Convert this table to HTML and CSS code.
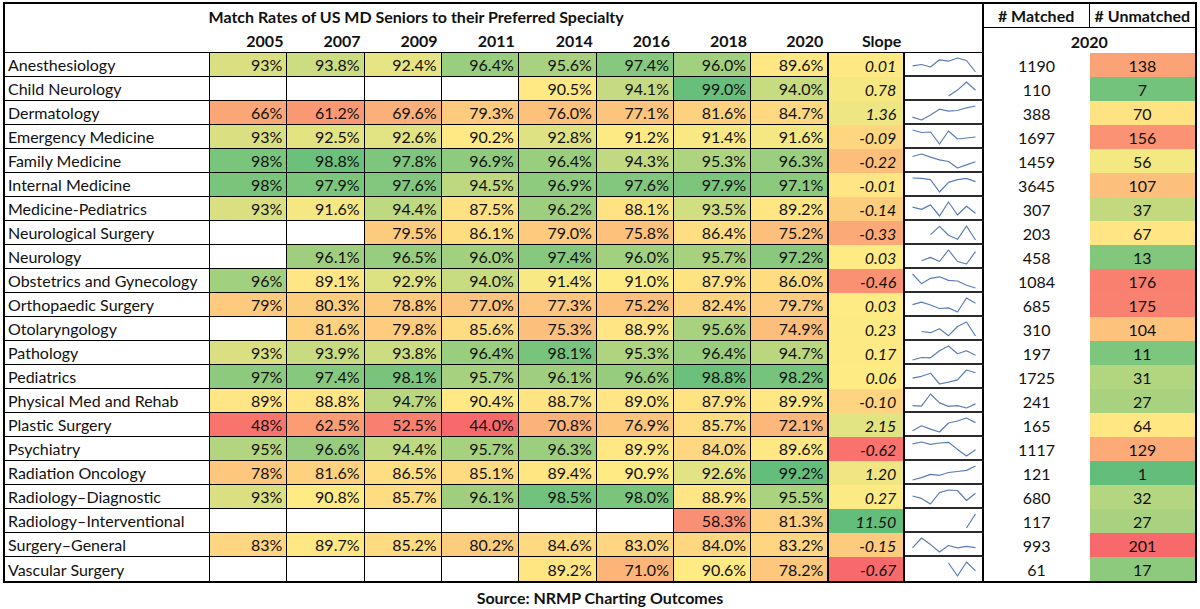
FILE: index.html
```html
<!DOCTYPE html>
<html lang="en">
<head>
<meta charset="utf-8">
<title>Match Rates of US MD Seniors to their Preferred Specialty</title>
<link rel="stylesheet" href="styles.css">
</head>
<body>
<div class="sheet">
<table class="grid">
<colgroup>
<col class="c-name"><col class="c-yr"><col class="c-yr"><col class="c-yr"><col class="c-yr"><col class="c-yr-w"><col class="c-yr"><col class="c-yr"><col class="c-yr-n"><col class="c-slope"><col class="c-spark"><col class="c-matched"><col class="c-unmatched">
</colgroup>
<thead>
<tr class="h1">
<th class="title" colspan="9">Match Rates of US MD Seniors to their Preferred Specialty</th>
<th class="hs"></th><th class="hsp"></th>
<th class="hm">#&nbsp;Matched</th><th class="hu">#&nbsp;Unmatched</th>
</tr>
<tr class="h2">
<th class="hn"></th><th class="hy">2005</th><th class="hy">2007</th><th class="hy">2009</th><th class="hy">2011</th><th class="hy">2014</th><th class="hy">2016</th><th class="hy">2018</th><th class="hy">2020</th>
<th class="hy hslope">Slope</th><th class="hsp hsp2"></th>
<th class="hyear" colspan="2">2020</th>
</tr>
</thead>
<tbody>
<tr class="d"><td class="n">Anesthesiology</td><td class="y">93%</td><td class="y">93.8%</td><td class="y">92.4%</td><td class="y">96.4%</td><td class="y">95.6%</td><td class="y">97.4%</td><td class="y">96.0%</td><td class="y">89.6%</td><td class="s">0.01</td><td class="sp"></td><td class="m">1190</td><td class="u">138</td></tr>
<tr class="d"><td class="n">Child Neurology</td><td class="y"></td><td class="y"></td><td class="y"></td><td class="y"></td><td class="y">90.5%</td><td class="y">94.1%</td><td class="y">99.0%</td><td class="y">94.0%</td><td class="s">0.78</td><td class="sp"></td><td class="m">110</td><td class="u">7</td></tr>
<tr class="d"><td class="n">Dermatology</td><td class="y">66%</td><td class="y">61.2%</td><td class="y">69.6%</td><td class="y">79.3%</td><td class="y">76.0%</td><td class="y">77.1%</td><td class="y">81.6%</td><td class="y">84.7%</td><td class="s">1.36</td><td class="sp"></td><td class="m">388</td><td class="u">70</td></tr>
<tr class="d"><td class="n">Emergency Medicine</td><td class="y">93%</td><td class="y">92.5%</td><td class="y">92.6%</td><td class="y">90.2%</td><td class="y">92.8%</td><td class="y">91.2%</td><td class="y">91.4%</td><td class="y">91.6%</td><td class="s">-0.09</td><td class="sp"></td><td class="m">1697</td><td class="u">156</td></tr>
<tr class="d"><td class="n">Family Medicine</td><td class="y">98%</td><td class="y">98.8%</td><td class="y">97.8%</td><td class="y">96.9%</td><td class="y">96.4%</td><td class="y">94.3%</td><td class="y">95.3%</td><td class="y">96.3%</td><td class="s">-0.22</td><td class="sp"></td><td class="m">1459</td><td class="u">56</td></tr>
<tr class="d"><td class="n">Internal Medicine</td><td class="y">98%</td><td class="y">97.9%</td><td class="y">97.6%</td><td class="y">94.5%</td><td class="y">96.9%</td><td class="y">97.6%</td><td class="y">97.9%</td><td class="y">97.1%</td><td class="s">-0.01</td><td class="sp"></td><td class="m">3645</td><td class="u">107</td></tr>
<tr class="d"><td class="n">Medicine-Pediatrics</td><td class="y">93%</td><td class="y">91.6%</td><td class="y">94.4%</td><td class="y">87.5%</td><td class="y">96.2%</td><td class="y">88.1%</td><td class="y">93.5%</td><td class="y">89.2%</td><td class="s">-0.14</td><td class="sp"></td><td class="m">307</td><td class="u">37</td></tr>
<tr class="d"><td class="n">Neurological Surgery</td><td class="y"></td><td class="y"></td><td class="y">79.5%</td><td class="y">86.1%</td><td class="y">79.0%</td><td class="y">75.8%</td><td class="y">86.4%</td><td class="y">75.2%</td><td class="s">-0.33</td><td class="sp"></td><td class="m">203</td><td class="u">67</td></tr>
<tr class="d"><td class="n">Neurology</td><td class="y"></td><td class="y">96.1%</td><td class="y">96.5%</td><td class="y">96.0%</td><td class="y">97.4%</td><td class="y">96.0%</td><td class="y">95.7%</td><td class="y">97.2%</td><td class="s">0.03</td><td class="sp"></td><td class="m">458</td><td class="u">13</td></tr>
<tr class="d"><td class="n">Obstetrics and Gynecology</td><td class="y">96%</td><td class="y">89.1%</td><td class="y">92.9%</td><td class="y">94.0%</td><td class="y">91.4%</td><td class="y">91.0%</td><td class="y">87.9%</td><td class="y">86.0%</td><td class="s">-0.46</td><td class="sp"></td><td class="m">1084</td><td class="u">176</td></tr>
<tr class="d"><td class="n">Orthopaedic Surgery</td><td class="y">79%</td><td class="y">80.3%</td><td class="y">78.8%</td><td class="y">77.0%</td><td class="y">77.3%</td><td class="y">75.2%</td><td class="y">82.4%</td><td class="y">79.7%</td><td class="s">0.03</td><td class="sp"></td><td class="m">685</td><td class="u">175</td></tr>
<tr class="d"><td class="n">Otolaryngology</td><td class="y"></td><td class="y">81.6%</td><td class="y">79.8%</td><td class="y">85.6%</td><td class="y">75.3%</td><td class="y">88.9%</td><td class="y">95.6%</td><td class="y">74.9%</td><td class="s">0.23</td><td class="sp"></td><td class="m">310</td><td class="u">104</td></tr>
<tr class="d"><td class="n">Pathology</td><td class="y">93%</td><td class="y">93.9%</td><td class="y">93.8%</td><td class="y">96.4%</td><td class="y">98.1%</td><td class="y">95.3%</td><td class="y">96.4%</td><td class="y">94.7%</td><td class="s">0.17</td><td class="sp"></td><td class="m">197</td><td class="u">11</td></tr>
<tr class="d"><td class="n">Pediatrics</td><td class="y">97%</td><td class="y">97.4%</td><td class="y">98.1%</td><td class="y">95.7%</td><td class="y">96.1%</td><td class="y">96.6%</td><td class="y">98.8%</td><td class="y">98.2%</td><td class="s">0.06</td><td class="sp"></td><td class="m">1725</td><td class="u">31</td></tr>
<tr class="d"><td class="n">Physical Med and Rehab</td><td class="y">89%</td><td class="y">88.8%</td><td class="y">94.7%</td><td class="y">90.4%</td><td class="y">88.7%</td><td class="y">89.0%</td><td class="y">87.9%</td><td class="y">89.9%</td><td class="s">-0.10</td><td class="sp"></td><td class="m">241</td><td class="u">27</td></tr>
<tr class="d"><td class="n">Plastic Surgery</td><td class="y">48%</td><td class="y">62.5%</td><td class="y">52.5%</td><td class="y">44.0%</td><td class="y">70.8%</td><td class="y">76.9%</td><td class="y">85.7%</td><td class="y">72.1%</td><td class="s">2.15</td><td class="sp"></td><td class="m">165</td><td class="u">64</td></tr>
<tr class="d"><td class="n">Psychiatry</td><td class="y">95%</td><td class="y">96.6%</td><td class="y">94.4%</td><td class="y">95.7%</td><td class="y">96.3%</td><td class="y">89.9%</td><td class="y">84.0%</td><td class="y">89.6%</td><td class="s">-0.62</td><td class="sp"></td><td class="m">1117</td><td class="u">129</td></tr>
<tr class="d"><td class="n">Radiation Oncology</td><td class="y">78%</td><td class="y">81.6%</td><td class="y">86.5%</td><td class="y">85.1%</td><td class="y">89.4%</td><td class="y">90.9%</td><td class="y">92.6%</td><td class="y">99.2%</td><td class="s">1.20</td><td class="sp"></td><td class="m">121</td><td class="u">1</td></tr>
<tr class="d"><td class="n">Radiology–Diagnostic</td><td class="y">93%</td><td class="y">90.8%</td><td class="y">85.7%</td><td class="y">96.1%</td><td class="y">98.5%</td><td class="y">98.0%</td><td class="y">88.9%</td><td class="y">95.5%</td><td class="s">0.27</td><td class="sp"></td><td class="m">680</td><td class="u">32</td></tr>
<tr class="d"><td class="n">Radiology–Interventional</td><td class="y"></td><td class="y"></td><td class="y"></td><td class="y"></td><td class="y"></td><td class="y"></td><td class="y">58.3%</td><td class="y">81.3%</td><td class="s">11.50</td><td class="sp"></td><td class="m">117</td><td class="u">27</td></tr>
<tr class="d"><td class="n">Surgery–General</td><td class="y">83%</td><td class="y">89.7%</td><td class="y">85.2%</td><td class="y">80.2%</td><td class="y">84.6%</td><td class="y">83.0%</td><td class="y">84.0%</td><td class="y">83.2%</td><td class="s">-0.15</td><td class="sp"></td><td class="m">993</td><td class="u">201</td></tr>
<tr class="d"><td class="n">Vascular Surgery</td><td class="y"></td><td class="y"></td><td class="y"></td><td class="y"></td><td class="y">89.2%</td><td class="y">71.0%</td><td class="y">90.6%</td><td class="y">78.2%</td><td class="s">-0.67</td><td class="sp"></td><td class="m">61</td><td class="u">17</td></tr>
</tbody>
</table>
<p class="source">Source: NRMP Charting Outcomes</p>
</div>
<script src="script.js"></script>
</body>
</html>
```
FILE: styles.css
```css
* { box-sizing: border-box; }
html, body { margin: 0; padding: 0; background: #ffffff; }
body {
  font-family: Lato, "Open Sans", "Liberation Sans", sans-serif;
  font-size: 16px;
  color: #111111;
}
.sheet { padding: 2px 0 0 3px; }
.grid {
  table-layout: fixed;
  border-collapse: separate;
  border-spacing: 0;
  width: 1194px;
  border: 2px solid #000;
}
.c-name { width: 205px; }
.c-yr { width: 77px; }
.c-yr-w { width: 78px; }
.c-yr-n { width: 76px; }
.c-slope { width: 78px; }
.c-spark { width: 78px; }
.c-matched { width: 106px; }
.c-unmatched { width: 105px; }

th, td { padding: 0; white-space: nowrap; overflow: hidden; line-height: 19px; }
th { font-weight: 700; }

.h1 { height: 24px; }
.h2 { height: 25px; }
.title { text-align: center; vertical-align: middle; }
.hsp { border-right: 2px solid #000; }
.hm { border-right: 1px solid #000; border-bottom: 1px solid #000; text-align: center; }
.hu { border-bottom: 1px solid #000; text-align: center; }
.hn, .hy { border-bottom: 1px solid #000; }
.hy { text-align: right; padding-right: 4px; padding-top: 1px; }
.hsp2 { border-bottom: 1px solid #000; }
.hyear { text-align: center; padding-top: 1px; }

.d { height: 24px; }
.n { padding-left: 3px; border-right: 1px solid #000; border-bottom: 1px solid #000; }
.y { text-align: right; padding-right: 4px; border-right: 1px solid #000; border-bottom: 1px solid #000; }
.y:nth-child(9) { border-right: 0; }
.s {
  text-align: right; padding-right: 7px; font-style: italic;
  border-left: 2px solid #000; border-right: 2px solid #000;
}
.sp { border-right: 2px solid #000; border-bottom: 2px solid #2b2b2b; vertical-align: top; }
.sp svg { display: block; }
.m { text-align: center; }
.u { text-align: center; }
.d:last-child td { border-bottom: 0; }

.source {
  margin: 5px 0 0 0;
  width: 1194px;
  text-align: center;
  font-weight: 700;
  font-size: 16px;
  line-height: 20px;
}
```
FILE: script.js
```js
(function () {
  var RED = [248, 105, 107], YEL = [255, 235, 132], GRN = [99, 190, 123];
  function mix(a, b, t) {
    t = Math.max(0, Math.min(1, t));
    return 'rgb(' + [0, 1, 2].map(function (i) { return Math.round(a[i] + (b[i] - a[i]) * t); }).join(',') + ')';
  }
  function pct50(arr) {
    var s = arr.slice().sort(function (a, b) { return a - b; });
    var r = (s.length - 1) * 0.5, lo = Math.floor(r), hi = Math.ceil(r);
    return s[lo] + (s[hi] - s[lo]) * (r - lo);
  }
  function scaler(vals, lowColor, highColor) {
    var mn = Math.min.apply(null, vals), mx = Math.max.apply(null, vals), md = pct50(vals);
    return function (v) {
      if (v <= md) return mix(lowColor, YEL, (v - mn) / (md - mn || 1));
      return mix(YEL, highColor, (v - md) / (mx - md || 1));
    };
  }
  function num(el) { var t = el.textContent.trim(); return t === '' ? null : parseFloat(t); }

  var rows = Array.prototype.slice.call(document.querySelectorAll('tr.d'));
  var yCells = [], yVals = [], sCells = [], sVals = [], uCells = [], uVals = [];
  rows.forEach(function (r) {
    r.querySelectorAll('td.y').forEach(function (c) { var v = num(c); if (v !== null) { yCells.push(c); yVals.push(v); } });
    var s = r.querySelector('td.s'); sCells.push(s); sVals.push(num(s));
    var u = r.querySelector('td.u'); uCells.push(u); uVals.push(num(u));
  });
  var fy = scaler(yVals, RED, GRN), fs = scaler(sVals, RED, GRN), fu = scaler(uVals, GRN, RED);
  yCells.forEach(function (c, i) { c.style.backgroundColor = fy(yVals[i]); });
  sCells.forEach(function (c, i) { c.style.backgroundColor = fs(sVals[i]); });
  uCells.forEach(function (c, i) { c.style.backgroundColor = fu(uVals[i]); });

  var NS = 'http://www.w3.org/2000/svg';
  rows.forEach(function (r) {
    var vals = Array.prototype.map.call(r.querySelectorAll('td.y'), num);
    var present = vals.filter(function (v) { return v !== null; });
    var mn = Math.min.apply(null, present), mx = Math.max.apply(null, present);
    var svg = document.createElementNS(NS, 'svg');
    svg.setAttribute('width', '76'); svg.setAttribute('height', '22');
    var pts = [];
    vals.forEach(function (v, i) {
      if (v === null) return;
      var x = 7.5 + i * 9;
      var y = 5 + (mx === mn ? 0.5 : (mx - v) / (mx - mn)) * 14;
      pts.push(x.toFixed(1) + ',' + y.toFixed(1));
    });
    var pl = document.createElementNS(NS, 'polyline');
    pl.setAttribute('points', pts.join(' '));
    pl.setAttribute('class', 'spark-line');
    pl.setAttribute('fill', 'none');
    pl.setAttribute('stroke', '#5b7db6');
    pl.setAttribute('stroke-width', '1.2');
    pl.setAttribute('stroke-linejoin', 'round');
    svg.appendChild(pl);
    r.querySelector('td.sp').appendChild(svg);
  });
})();
```
